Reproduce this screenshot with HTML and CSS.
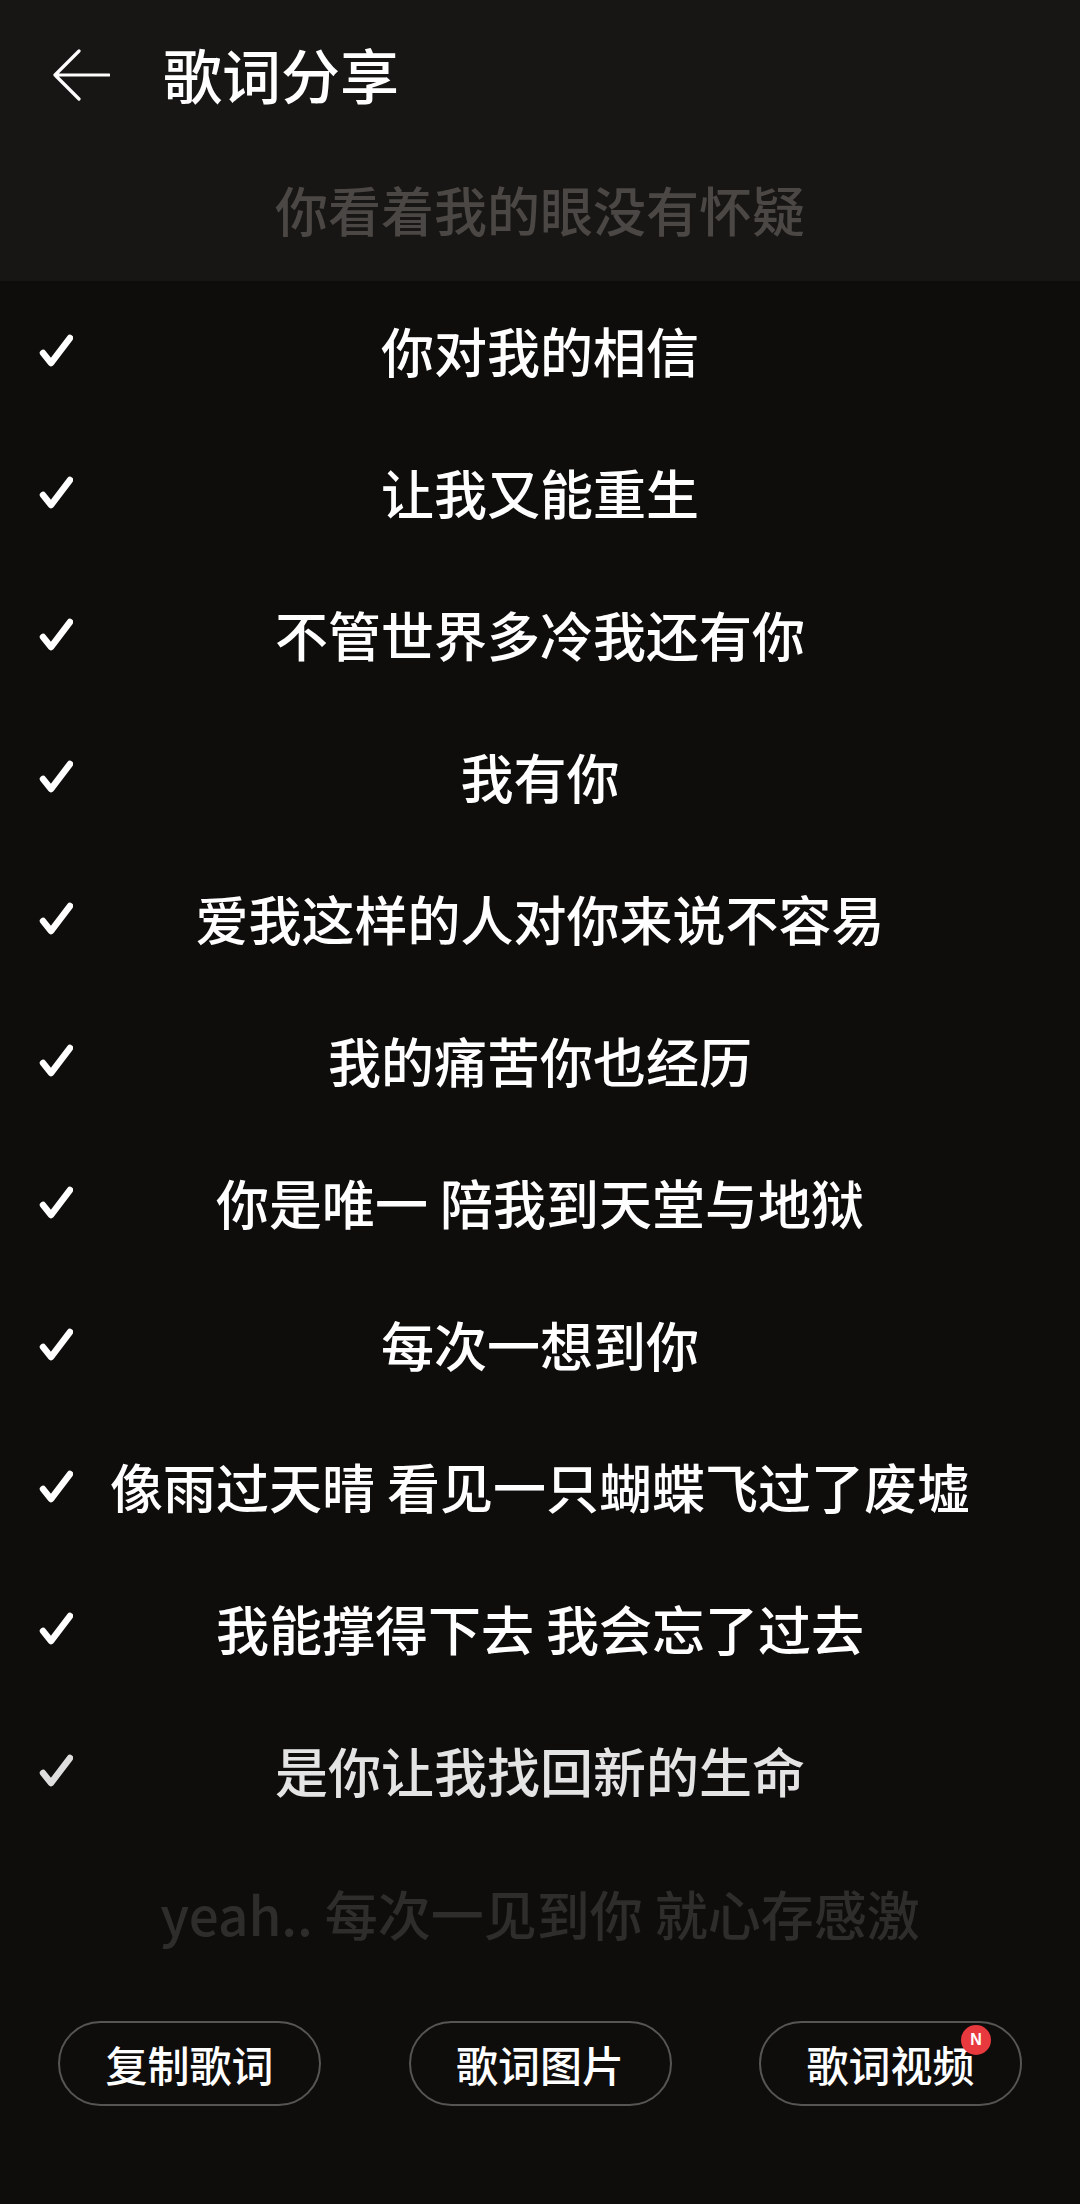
FILE: index.html
```html
<!DOCTYPE html>
<html lang="zh-CN">
<head>
    <meta charset="UTF-8">
    <meta name="viewport" content="width=device-width, initial-scale=1.0">
    <title>歌词分享</title>
    <link rel="stylesheet" href="styles.css">
</head>
<body>
    <div class="top-band">
        <div class="header">
            <svg class="back" width="58" height="52" viewBox="0 0 58 52">
                <path d="M3 26 H57 M27 2 L3 26 L27 50" fill="none" stroke="#fff" stroke-width="3.2" stroke-linecap="round" stroke-linejoin="round"/>
            </svg>
            <h1 class="title">歌词分享</h1>
        </div>
        <div class="faded faded-top">你看着我的眼没有怀疑</div>
    </div>

    <ul class="lyric-list">
        <li class="row"><svg class="check" viewBox="0 0 34 34"><path d="M4 19 L12 29 L31 4"/></svg><span class="text">你对我的相信</span></li>
        <li class="row"><svg class="check" viewBox="0 0 34 34"><path d="M4 19 L12 29 L31 4"/></svg><span class="text">让我又能重生</span></li>
        <li class="row"><svg class="check" viewBox="0 0 34 34"><path d="M4 19 L12 29 L31 4"/></svg><span class="text">不管世界多冷我还有你</span></li>
        <li class="row"><svg class="check" viewBox="0 0 34 34"><path d="M4 19 L12 29 L31 4"/></svg><span class="text">我有你</span></li>
        <li class="row"><svg class="check" viewBox="0 0 34 34"><path d="M4 19 L12 29 L31 4"/></svg><span class="text">爱我这样的人对你来说不容易</span></li>
        <li class="row"><svg class="check" viewBox="0 0 34 34"><path d="M4 19 L12 29 L31 4"/></svg><span class="text">我的痛苦你也经历</span></li>
        <li class="row"><svg class="check" viewBox="0 0 34 34"><path d="M4 19 L12 29 L31 4"/></svg><span class="text">你是唯一 陪我到天堂与地狱</span></li>
        <li class="row"><svg class="check" viewBox="0 0 34 34"><path d="M4 19 L12 29 L31 4"/></svg><span class="text">每次一想到你</span></li>
        <li class="row"><svg class="check" viewBox="0 0 34 34"><path d="M4 19 L12 29 L31 4"/></svg><span class="text">像雨过天晴 看见一只蝴蝶飞过了废墟</span></li>
        <li class="row"><svg class="check" viewBox="0 0 34 34"><path d="M4 19 L12 29 L31 4"/></svg><span class="text">我能撑得下去 我会忘了过去</span></li>
        <li class="row dim"><svg class="check" viewBox="0 0 34 34"><path d="M4 19 L12 29 L31 4"/></svg><span class="text">是你让我找回新的生命</span></li>
    </ul>

    <div class="faded faded-bottom">yeah.. 每次一见到你 就心存感激</div>

    <div class="actions">
        <button class="pill">复制歌词</button>
        <button class="pill">歌词图片</button>
        <button class="pill">歌词视频<span class="badge">N</span></button>
    </div>
</body>
</html>
```

FILE: styles.css
```css
body {
    margin: 0;
    width: 1080px;
    height: 2204px;
    background-color: #0f0d0c;
    color: #fff;
    font-family: "Noto Sans CJK SC", "Noto Sans", sans-serif;
    overflow: hidden;
}
.top-band {
    box-sizing: border-box;
    height: 281px;
    padding-bottom: 8px;
    background-color: #181614;
}
.header {
    display: flex;
    align-items: center;
    height: 146px;
    padding-left: 52px;
}
.back {
    display: block;
    margin-top: 4px;
}
.title {
    margin: 0 0 0 53px;
    font-size: 59px;
    font-weight: 500;
    line-height: 1;
}
.faded {
    display: flex;
    align-items: center;
    justify-content: center;
    font-size: 53px;
    font-weight: 500;
    line-height: 1;
}
.faded-top {
    height: 127px;
    color: #4a4745;
}
.lyric-list {
    list-style: none;
    margin: 0;
    padding: 0;
}
.row {
    box-sizing: border-box;
    display: grid;
    grid-template-columns: 1fr auto 1fr;
    align-items: center;
    height: 142px;
    padding-bottom: 3px;
}
.check {
    width: 34px;
    height: 34px;
    margin-left: 39px;
    fill: none;
    stroke: #fff;
    stroke-width: 6.5;
    stroke-linecap: round;
    stroke-linejoin: round;
}
.text {
    font-size: 53px;
    font-weight: 500;
    line-height: 1;
    white-space: nowrap;
}
.row.dim .text {
    color: #e4e4e4;
}
.row.dim .check {
    stroke: #dedede;
}
.faded-bottom {
    box-sizing: border-box;
    height: 148px;
    padding-bottom: 8px;
    color: #2f2d2b;
}
.actions {
    display: flex;
    justify-content: space-between;
    padding: 30px 58px 0;
}
.pill {
    position: relative;
    width: 263px;
    height: 85px;
    border: 2px solid #575553;
    border-radius: 43px;
    background: transparent;
    color: #fff;
    font-family: "Noto Sans CJK SC", "Noto Sans", sans-serif;
    font-size: 42px;
    font-weight: 500;
    line-height: 1;
    padding: 0;
}
.badge {
    position: absolute;
    top: 2px;
    right: 29px;
    width: 30px;
    height: 30px;
    border-radius: 50%;
    background-color: #e8393e;
    color: #fff;
    font-family: "Liberation Sans", Arial, sans-serif;
    font-size: 16px;
    font-weight: 700;
    line-height: 30px;
    text-align: center;
}
```
